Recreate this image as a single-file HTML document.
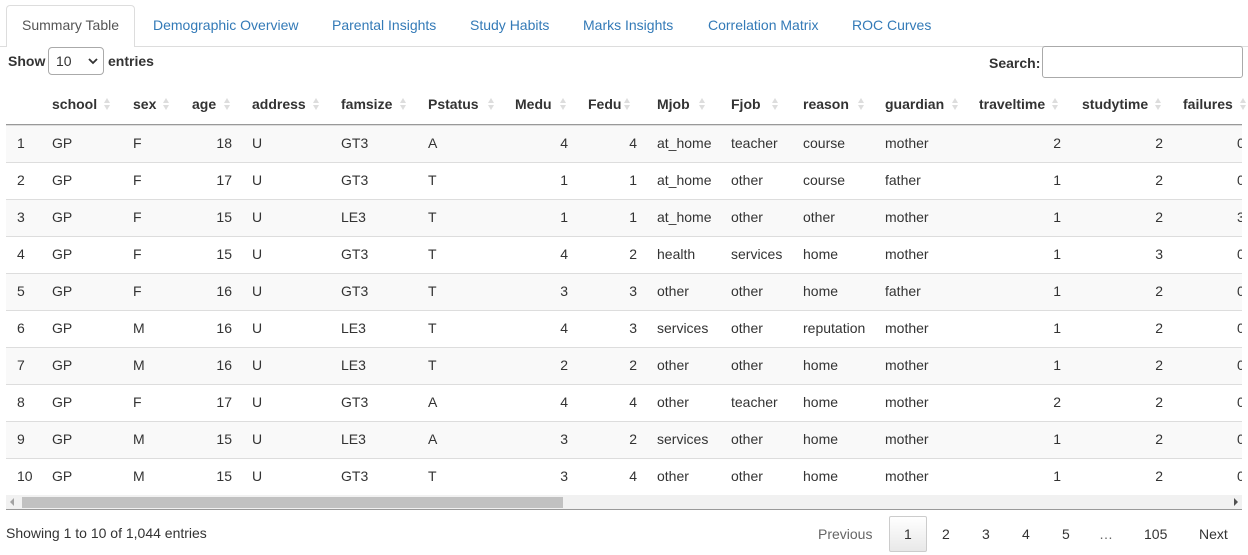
<!DOCTYPE html>
<html><head><meta charset="utf-8"><style>
*{margin:0;padding:0;box-sizing:border-box}
body{width:1248px;height:555px;overflow:hidden;background:#fff;font-family:"Liberation Sans",Arial,sans-serif;font-size:14px;color:#333;position:relative}
.a{position:absolute;white-space:nowrap}
.tab{position:absolute;top:17px;color:#337ab7;font-size:14px}
.row{position:absolute;left:6px;width:1236px;height:37px;border-top:1px solid #ddd;overflow:hidden}
.row.o{background:#f9f9f9}
.row span{position:absolute;top:9px;white-space:nowrap}
.r{text-align:right;width:40px}
.h{position:absolute;top:96px;font-weight:bold;color:#333}
.s{position:absolute;top:96px;width:7px;height:16px}
.s:before{content:"";position:absolute;left:0;top:2px;border-left:3.5px solid transparent;border-right:3.5px solid transparent;border-bottom:5px solid #ddd}
.s:after{content:"";position:absolute;left:0;top:9px;border-left:3.5px solid transparent;border-right:3.5px solid transparent;border-top:5px solid #ddd}
</style></head><body>
<div class="a" style="left:0;top:46px;width:1248px;border-top:1px solid #ddd"></div>
<div class="a" style="left:6px;top:5px;width:129px;height:42px;border:1px solid #ddd;border-bottom:none;border-radius:4px 4px 0 0;background:#fff"></div>
<div class="tab" style="left:22px;color:#555">Summary Table</div>
<div class="tab" style="left:153px">Demographic Overview</div>
<div class="tab" style="left:332px">Parental Insights</div>
<div class="tab" style="left:470px">Study Habits</div>
<div class="tab" style="left:583px">Marks Insights</div>
<div class="tab" style="left:708px">Correlation Matrix</div>
<div class="tab" style="left:852px">ROC Curves</div>

<div class="a" style="left:8px;top:53px;font-weight:bold">Show</div>
<div class="a" style="left:48px;top:47px;width:56px;height:28px;border:1px solid #aaa;border-radius:4px;background:#fff"></div>
<div class="a" style="left:56px;top:53px">10</div>
<svg class="a" style="left:88px;top:57px" width="10" height="8"><path d="M1 2 L5 6 L9 2" stroke="#333" stroke-width="1.8" fill="none"/></svg>
<div class="a" style="left:108px;top:53px;font-weight:bold">entries</div>
<div class="a" style="left:989px;top:55px;font-weight:bold">Search:</div>
<div class="a" style="left:1042px;top:46px;width:201px;height:32px;border:1px solid #aaa;border-radius:3px"></div>

<div class="h" style="left:52px">school</div><div class="s" style="left:104px"></div>
<div class="h" style="left:133px">sex</div><div class="s" style="left:163px"></div>
<div class="h" style="left:192px">age</div><div class="s" style="left:224px"></div>
<div class="h" style="left:252px">address</div><div class="s" style="left:313px"></div>
<div class="h" style="left:341px">famsize</div><div class="s" style="left:400px"></div>
<div class="h" style="left:428px">Pstatus</div><div class="s" style="left:488px"></div>
<div class="h" style="left:515px">Medu</div><div class="s" style="left:560px"></div>
<div class="h" style="left:588px">Fedu</div><div class="s" style="left:624px"></div>
<div class="h" style="left:657px">Mjob</div><div class="s" style="left:699px"></div>
<div class="h" style="left:731px">Fjob</div><div class="s" style="left:772px"></div>
<div class="h" style="left:803px">reason</div><div class="s" style="left:858px"></div>
<div class="h" style="left:885px">guardian</div><div class="s" style="left:952px"></div>
<div class="h" style="left:979px">traveltime</div><div class="s" style="left:1052px"></div>
<div class="h" style="left:1082px">studytime</div><div class="s" style="left:1155px"></div>
<div class="h" style="left:1183px">failures</div><div class="s" style="left:1240px"></div>
<div class="a" style="left:6px;top:124px;width:1236px;border-top:1px solid #999"></div>

<div id="rows"></div>
<script>
var d=[
[1,"GP","F",18,"U","GT3","A",4,4,"at_home","teacher","course","mother",2,2,0],
[2,"GP","F",17,"U","GT3","T",1,1,"at_home","other","course","father",1,2,0],
[3,"GP","F",15,"U","LE3","T",1,1,"at_home","other","other","mother",1,2,3],
[4,"GP","F",15,"U","GT3","T",4,2,"health","services","home","mother",1,3,0],
[5,"GP","F",16,"U","GT3","T",3,3,"other","other","home","father",1,2,0],
[6,"GP","M",16,"U","LE3","T",4,3,"services","other","reputation","mother",1,2,0],
[7,"GP","M",16,"U","LE3","T",2,2,"other","other","home","mother",1,2,0],
[8,"GP","F",17,"U","GT3","A",4,4,"other","teacher","home","mother",2,2,0],
[9,"GP","M",15,"U","LE3","A",3,2,"services","other","home","mother",1,2,0],
[10,"GP","M",15,"U","GT3","T",3,4,"other","other","home","mother",1,2,0]];
var L=[11,46,127,null,246,335,422,null,null,651,725,797,879,null,null,1231];
var R={3:226,7:562,8:631,13:1055,14:1157};
var h="";
d.forEach(function(r,i){
 h+='<div class="row'+(i%2==0?' o':'')+'" style="top:'+(125+i*37)+'px">';
 r.forEach(function(v,j){
  if(R[j]!==undefined) h+='<span class="r" style="left:'+(R[j]-40)+'px">'+v+'</span>';
  else h+='<span style="left:'+L[j]+'px">'+v+'</span>';
 });
 h+='</div>';
});
document.getElementById("rows").innerHTML=h;
</script>
<div class="a" style="left:6px;top:495px;width:1236px;height:15px;background:#f1f1f1;border-bottom:1px solid #999"></div>
<div class="a" style="left:22px;top:497px;width:541px;height:11px;background:#c1c1c1"></div>
<svg class="a" style="left:9px;top:498px" width="6" height="8"><path d="M5 0 L1 4 L5 8Z" fill="#a3a3a3"/></svg>
<svg class="a" style="left:1233px;top:498px" width="6" height="8"><path d="M1 0 L5 4 L1 8Z" fill="#505050"/></svg>

<div class="a" style="left:6px;top:525px">Showing 1 to 10 of 1,044 entries</div>
<div class="a" style="left:818px;top:526px;color:#666">Previous</div>
<div class="a" style="left:889px;top:516px;width:38px;height:36px;border:1px solid #ccc;border-radius:2px;background:linear-gradient(#fff,#e8e8e8)"></div>
<div class="a" style="left:904px;top:526px">1</div>
<div class="a" style="left:942px;top:526px">2</div>
<div class="a" style="left:982px;top:526px">3</div>
<div class="a" style="left:1022px;top:526px">4</div>
<div class="a" style="left:1062px;top:526px">5</div>
<div class="a" style="left:1099px;top:526px;color:#666">…</div>
<div class="a" style="left:1144px;top:526px">105</div>
<div class="a" style="left:1199px;top:526px">Next</div>
</body></html>
